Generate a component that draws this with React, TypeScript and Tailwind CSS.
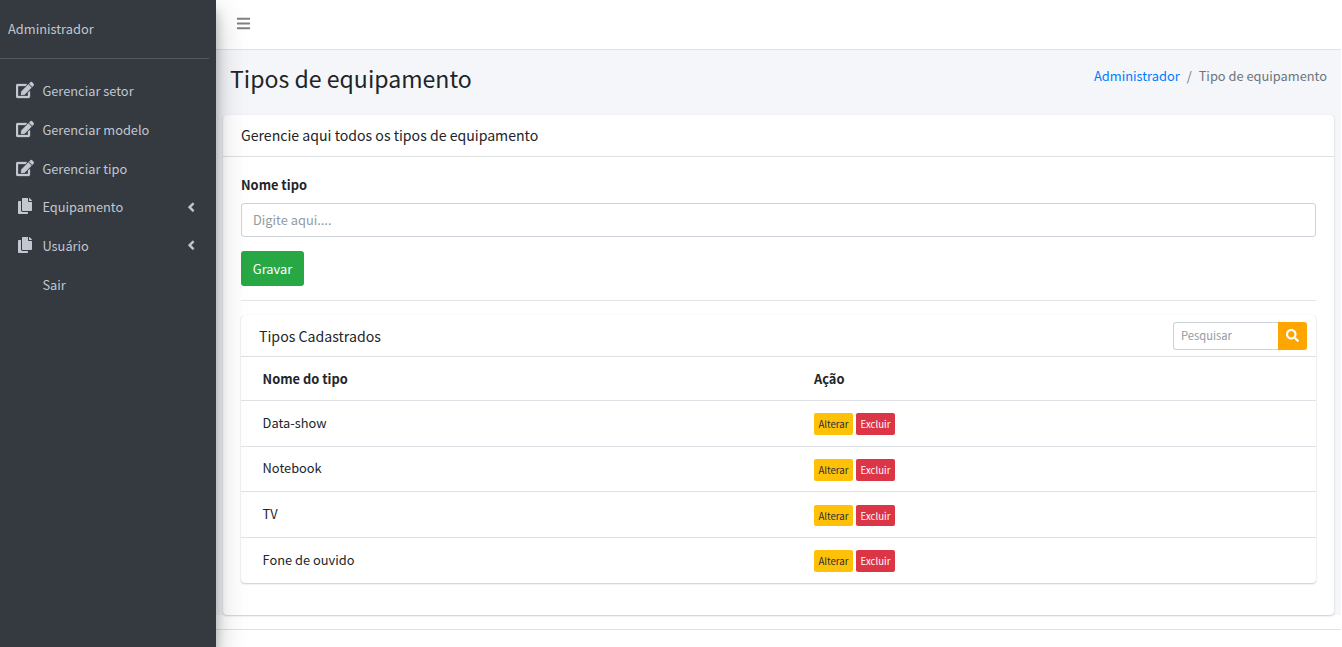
import type { ReactNode } from "react";
import { FaAngleLeft, FaBars, FaCopy, FaEdit, FaSearch } from "react-icons/fa";

type MenuItem = { label: string; row: string; icon?: ReactNode; expandable?: boolean };

const editIcon = <FaEdit className="mb-0.5 size-[18px]" stroke="currentColor" strokeWidth="10" />;
const copyIcon = <FaCopy className="mb-0.5 size-4" />;

const menu: MenuItem[] = [
  { label: "Gerenciar setor", row: "h-[39px]", icon: editIcon },
  { label: "Gerenciar modelo", row: "h-[39px]", icon: editIcon },
  { label: "Gerenciar tipo", row: "h-[39px]", icon: editIcon },
  { label: "Equipamento", row: "h-[38px]", icon: copyIcon, expandable: true },
  { label: "Usuário", row: "h-[39px]", icon: copyIcon, expandable: true },
  { label: "Sair", row: "h-[39px]" },
];

const types = [
  { name: "Data-show", row: "h-[46px]", actions: "h-[22px]" },
  { name: "Notebook", row: "h-[45px]", actions: "mt-0.5 h-[22px]" },
  { name: "TV", row: "h-[46px]", actions: "mt-0.5 h-[21px]" },
  { name: "Fone de ouvido", row: "h-[46px]", actions: "h-[22px]" },
];

function Sidebar() {
  return (
    <aside className="relative z-10 w-[216px] shrink-0 bg-[#343a40] text-[#c2c7d0] shadow-[0_14px_28px_rgba(0,0,0,0.25),0_10px_10px_rgba(0,0,0,0.22)]">
      <div className="mr-[7px] flex h-[59px] items-center border-b border-[#4f5962] pl-2">
        <span>Administrador</span>
      </div>
      <nav className="pt-3">
        {menu.map((item) => (
          <a key={item.label} href="#" className={`flex items-center pr-[18px] pl-[14px] ${item.row}`}>
            <span className="flex w-[22px] shrink-0 justify-center">{item.icon}</span>
            <span className="ml-[6.4px] grow">{item.label}</span>
            {item.expandable && (
              <FaAngleLeft className="size-[14.4px]" stroke="currentColor" strokeWidth="12" />
            )}
          </a>
        ))}
      </nav>
    </aside>
  );
}

function TypesCard() {
  return (
    <section className="mt-[14px] h-[268px] rounded-[4px] bg-white shadow-[0_0_1px_rgba(0,0,0,0.1),0_1px_2px_rgba(0,0,0,0.2)]">
      <header className="flex h-[42px] items-center justify-between border-b border-[#dfdfdf] pr-[9px] pl-[18px]">
        <h3 className="text-[14.15px]">Tipos Cadastrados</h3>
        <div className="flex h-7 text-[11.2px]">
          <input
            className="w-[105px] rounded-l-[3px] border border-r-0 border-[#ced4da] px-[7px] pb-0.5 outline-none placeholder:text-[#939ba2]"
            placeholder="Pesquisar"
          />
          <button className="flex w-[29px] items-center justify-center rounded-r-[3px] bg-[#ffa500] text-white">
            <FaSearch className="size-[13px]" />
          </button>
        </div>
      </header>
      <div className="flex h-11 items-center border-b border-[#dee2e6] pt-px pl-[21.6px] font-bold">
        <span className="w-[551.4px]">Nome do tipo</span>
        <span>Ação</span>
      </div>
      <div className="divide-y divide-[#dee2e6]">
        {types.map((type) => (
          <div key={type.name} className={`flex items-center pl-[21.6px] ${type.row}`}>
            <span className="w-[551.4px] pb-0.5">{type.name}</span>
            <div className={`flex gap-[3px] text-[9.65px] ${type.actions}`}>
              <button className="w-[39px] rounded-[2px] bg-[#ffc107] text-[#1f2d3d]">Alterar</button>
              <button className="w-[39px] rounded-[2px] bg-[#dc3545] text-white">Excluir</button>
            </div>
          </div>
        ))}
      </div>
    </section>
  );
}

export default function App() {
  return (
    <div className="flex h-[647px] w-[1341px] overflow-hidden bg-white font-['Source_Sans_Pro','Noto_Sans_CJK_SC',sans-serif] text-[12.83px] leading-[20px] text-[#212529]">
      <Sidebar />
      <div className="flex min-w-0 grow flex-col">
        <div className="flex h-[50px] shrink-0 items-center border-b border-[#dee2e6] pb-0.5 pl-5 text-[#808080]">
          <FaBars className="size-[15px]" />
        </div>
        <main className="h-[565px] shrink-0 bg-[#f4f6f9] px-[7px]">
          <div className="flex h-[65px] justify-between px-[7px] pt-[13px]">
            <h1 className="text-[23.1px] leading-[31px]">Tipos de equipamento</h1>
            <div className="flex gap-[7px] pt-[3px] text-[#6c757d]">
              <a href="#" className="text-[#007bff]">Administrador</a>
              <span>/</span>
              <span>Tipo de equipamento</span>
            </div>
          </div>
          <section className="h-[500px] rounded-[4px] bg-white shadow-[0_0_1px_rgba(0,0,0,0.1),0_1px_2px_rgba(0,0,0,0.2)]">
            <header className="flex h-[42px] items-center border-b border-[#dfdfdf] pb-0.5 pl-[18px]">
              <h3 className="text-[14.12px]">Gerencie aqui todos os tipos de equipamento</h3>
            </header>
            <div className="px-[18px] pt-[18px]">
              <label className="block h-7 font-bold">Nome tipo</label>
              <input
                className="block h-[34px] w-full rounded-[3px] border border-[#ced4da] px-[11px] pb-0.5 outline-none placeholder:text-[#939ba2]"
                placeholder="Digite aqui...."
              />
              <button className="mt-[14px] block h-[35px] w-[63px] rounded-[3px] bg-[#28a745] text-white">Gravar</button>
              <hr className="mt-[14px] border-[#e5e5e5]" />
              <TypesCard />
            </div>
          </section>
        </main>
        <footer className="mt-[14px] grow border-t border-[#dee2e6]" />
      </div>
    </div>
  );
}
